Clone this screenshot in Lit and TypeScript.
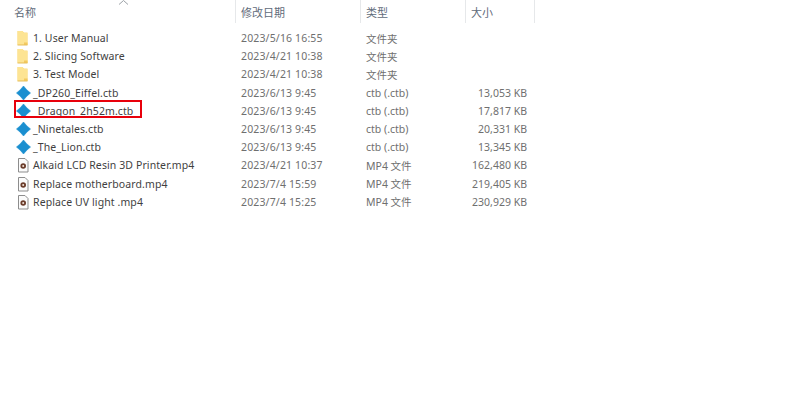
import { LitElement, html, css, svg } from "lit";
import { customElement } from "lit/decorators.js";

type Kind = "folder" | "ctb" | "mp4";
interface Row { kind: Kind; name: string; date: string; type: string; size: string; }

const ROWS: Row[] = [
  { kind: "folder", name: "1. User Manual", date: "2023/5/16 16:55", type: "文件夹", size: "" },
  { kind: "folder", name: "2. Slicing Software", date: "2023/4/21 10:38", type: "文件夹", size: "" },
  { kind: "folder", name: "3. Test Model", date: "2023/4/21 10:38", type: "文件夹", size: "" },
  { kind: "ctb", name: "_DP260_Eiffel.ctb", date: "2023/6/13 9:45", type: "ctb (.ctb)", size: "13,053 KB" },
  { kind: "ctb", name: "_Dragon_2h52m.ctb", date: "2023/6/13 9:45", type: "ctb (.ctb)", size: "17,817 KB" },
  { kind: "ctb", name: "_Ninetales.ctb", date: "2023/6/13 9:45", type: "ctb (.ctb)", size: "20,331 KB" },
  { kind: "ctb", name: "_The_Lion.ctb", date: "2023/6/13 9:45", type: "ctb (.ctb)", size: "13,345 KB" },
  { kind: "mp4", name: "Alkaid LCD Resin 3D Printer.mp4", date: "2023/4/21 10:37", type: "MP4 文件", size: "162,480 KB" },
  { kind: "mp4", name: "Replace motherboard.mp4", date: "2023/7/4 15:59", type: "MP4 文件", size: "219,405 KB" },
  { kind: "mp4", name: "Replace UV light .mp4", date: "2023/7/4 15:25", type: "MP4 文件", size: "230,929 KB" },
];

const ICONS: Record<Kind, unknown> = {
  folder: svg`<path d="M1.5 1h5l1.5 1.5h3.5v12.5h-10z" fill="#fbdc80"/><path d="M1.5 1h5.5v2h4.5v11.5h-10z" fill="#fde493"/><path d="M8 12.5h3.5v2.5h-3.5z" fill="#f3c95f"/><path d="M1.5 15h10" stroke="#e6bf5c" stroke-width="1"/>`,
  ctb: svg`<path d="M7.5 1Q10.5 5 14.5 8Q10.5 11 7.5 15Q4.5 11 0.5 8Q4.5 5 7.5 1Z" fill="#1a8fd0" stroke="#1a8fd0" stroke-width=".6"/>`,
  mp4: svg`<path d="M2.5 1.5h6.5l3 3v10.5h-9.5z" fill="#fbfbfb" stroke="#8d8d8d"/><circle cx="7.2" cy="9" r="2.8" fill="#6b3d2c"/><circle cx="7.2" cy="9" r="1" fill="#f4e6dc"/>`,
};

@customElement("app-root")
export class AppRoot extends LitElement {
  static styles = css`
    :host {
      display: block;
      position: relative;
      width: 800px;
      height: 416px;
      overflow: hidden;
      background: #fff;
      font-family: "Noto Sans", "Noto Sans CJK SC", sans-serif;
      font-size: 10.5px;
      color: #444;
    }
    .table {
      display: grid;
      grid-template-columns: 236px 125px 105px 69px;
      width: 535px;
    }
    .header {
      display: contents;
    }
    .hcell {
      height: 23px;
      margin-bottom: 1px;
      padding-left: 5px;
      display: flex;
      align-items: center;
      border-right: 1px solid #e6e8ea;
      color: #5f6b7a;
      font-size: 11px;
      box-sizing: border-box;
    }
    .hcell.first { padding-left: 14px; position: relative; }
    .chev {
      position: absolute;
      left: 118px;
      top: 0;
      width: 11px;
      height: 5px;
    }
    .spacer { grid-column: 1 / -1; height: 5px; }
    .row { display: contents; }
    .cell {
      height: 18.2px;
      display: flex;
      align-items: center;
      white-space: nowrap;
      color: #6f6f6f;
      box-sizing: border-box;
    }
    .name {
      color: #3f3f3f;
      padding-left: 16px;
      gap: 2px;
      letter-spacing: 0.1px;
    }
    .name svg { width: 15px; height: 16px; flex: none; }
    .date { padding-left: 5px; letter-spacing: 0.15px; }
    .type { padding-left: 5px; }
    .size { justify-content: flex-end; padding-right: 8px; }
    .highlight {
      position: absolute;
      left: 14px;
      top: 100px;
      width: 128px;
      height: 18px;
      border: 2px solid #e8000b;
      box-sizing: border-box;
    }
  `;

  render() {
    return html`
      <div class="table">
        <div class="header">
          <div class="hcell first">名称
            <svg class="chev" viewBox="0 0 11 5"><path d="M1 4.5L5.5 0.5L10 4.5" fill="none" stroke="#9aa0a6"/></svg>
          </div>
          <div class="hcell">修改日期</div>
          <div class="hcell">类型</div>
          <div class="hcell">大小</div>
        </div>
        <div class="spacer"></div>
        ${ROWS.map(
          (r) => html`<div class="row">
            <div class="cell name"><svg viewBox="0 0 15 16">${ICONS[r.kind]}</svg><span>${r.name}</span></div>
            <div class="cell date">${r.date}</div>
            <div class="cell type">${r.type}</div>
            <div class="cell size">${r.size}</div>
          </div>`
        )}
      </div>
      <div class="highlight"></div>
    `;
  }
}
